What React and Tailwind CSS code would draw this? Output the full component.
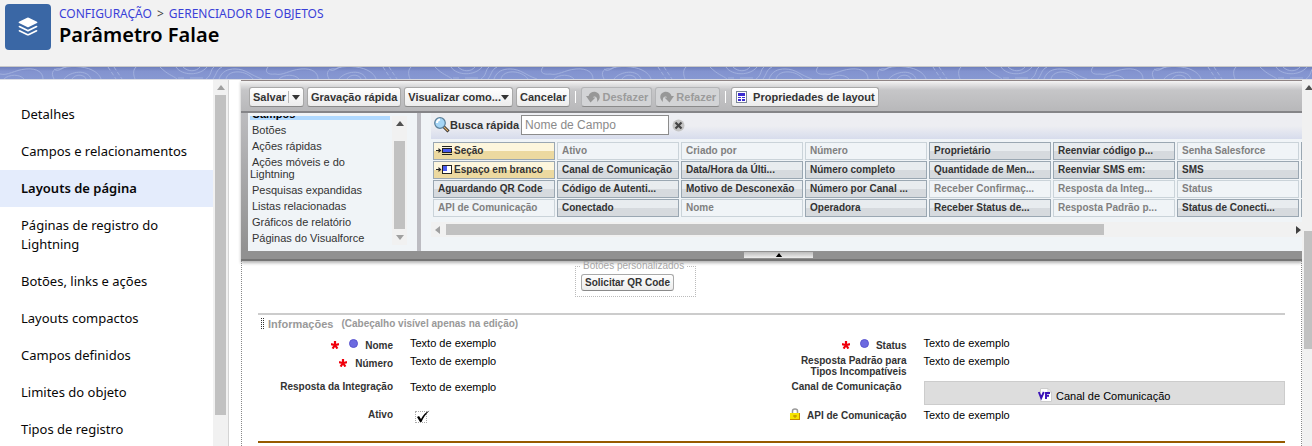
import React from "react";

const navItems = [
  "Detalhes",
  "Campos e relacionamentos",
  "Layouts de página",
  "Páginas de registro do Lightning",
  "Botões, links e ações",
  "Layouts compactos",
  "Campos definidos",
  "Limites do objeto",
  "Tipos de registro",
];

const categories = [
  "Campos",
  "Botões",
  "Ações rápidas",
  "Ações móveis e do Lightning",
  "Pesquisas expandidas",
  "Listas relacionadas",
  "Gráficos de relatório",
  "Páginas do Visualforce",
];

// Palette columns; "gold" are layout tools, "off" fields are already on the page.
const palette = [
  ["Seção", "gold"], ["Espaço em branco", "gold"], ["Aguardando QR Code", "on"], ["API de Comunicação", "off"],
  ["Ativo", "off"], ["Canal de Comunicação", "on"], ["Código de Autenti...", "on"], ["Conectado", "on"],
  ["Criado por", "off"], ["Data/Hora da Últi...", "on"], ["Motivo de Desconexão", "on"], ["Nome", "off"],
  ["Número", "off"], ["Número completo", "on"], ["Número por Canal ...", "on"], ["Operadora", "on"],
  ["Proprietário", "on"], ["Quantidade de Men...", "on"], ["Receber Confirmaç...", "off"], ["Receber Status de...", "on"],
  ["Reenviar código p...", "on"], ["Reenviar SMS em:", "on"], ["Resposta da Integ...", "off"], ["Resposta Padrão p...", "off"],
  ["Senha Salesforce", "off"], ["SMS", "on"], ["Status", "off"], ["Status de Conecti...", "on"],
  ["", "on"], ["", "on"], ["", "on"], ["", "on"],
];

const tones = {
  gold: "border-[#9aa7b2] bg-linear-to-b from-[#fdf6dd] from-50% to-[#ecd9a0] to-50% text-[#333]",
  on: "border-[#9aa7b2] bg-linear-to-b from-[#e8ecef] from-50% to-[#d6dade] to-50% text-[#333]",
  off: "border-[#cad3d9] bg-[#f0f4f7] text-[#808080]",
};

function Arrow({ dir = "up", className = "" }) {
  const d = {
    up: "M0 5 4 0 8 5Z",
    down: "M0 0H8L4 5Z",
    left: "M5 0V8L0 4Z",
    right: "M0 0V8L5 4Z",
  }[dir];
  const side = dir === "left" || dir === "right";
  return (
    <svg width={side ? 5 : 8} height={side ? 8 : 5} className={"shrink-0 " + className} fill="currentColor" aria-hidden="true">
      <path d={d} />
    </svg>
  );
}

function Banner() {
  return (
    <svg className="block h-3 w-full" aria-hidden="true">
      <defs>
        <pattern id="topo" width="275" height="12" patternUnits="userSpaceOnUse">
          <g fill="none" stroke="#a0afdd" strokeWidth="1">
            <path d="M0 7C8 9 14 3 26 2C38 1 43 6 43 12M4 12C9 7 20 7 24 12M54 12C50 5 54 1 60 2C68 -2 84 -1 92 3C98 6 100 9 101 12M54 2C58 6 63 0 66 0M64 12C70 4 88 2 91 12M72 12C76 6 85 8 86 12" />
            <path d="M108 0 116 12M114 0 122 12" strokeDasharray="4 2" />
            <path d="M136 0C132 4 134 9 135 12M160 0C168 8 172 8 177 12M176 0C182 9 200 9 207 0M183 0C188 5 196 5 200 0M178 11H184M190 11H203M206 12C212 8 210 3 214 0M213 12C217 7 216 3 222 0M219 12C222 4 228 2 235 2C246 2 250 8 262 12M226 12C228 2 247 3 253 12M268 0C264 5 268 8 275 7" />
          </g>
        </pattern>
        <linearGradient id="sky" x2="0" y2="1">
          <stop offset="0" stopColor="#6f80bb" />
          <stop offset=".35" stopColor="#8393cf" />
          <stop offset="1" stopColor="#8798d2" />
        </linearGradient>
      </defs>
      <rect width="100%" height="12" fill="url(#sky)" />
      <rect width="100%" height="12" fill="url(#topo)" />
    </svg>
  );
}

function ToolButton({ children, disabled, size = "h-5 text-[11px]", className = "" }) {
  const look = disabled
    ? "border-[#b4b5b7] bg-[#d3d4d6] text-[#9b9b9b]"
    : "border-[#a9a9a9] bg-linear-to-b from-white to-[#ececec] text-[#333]";
  return (
    <button
      type="button"
      disabled={disabled}
      className={"flex shrink-0 items-center rounded-[3px] border border-b-[#8a8a8a] leading-4 font-bold whitespace-nowrap " + size + " " + look + " " + className}
    >
      {children}
    </button>
  );
}

function CurvedArrow({ flip }) {
  return (
    <svg width="14" height="12" viewBox="0 0 14 12" className={flip ? "-scale-x-100" : ""} aria-hidden="true">
      <path d="M0 5H2.500C3.500 1.500 6.500 .5 9 .8C12.500 1.300 14.500 4.500 13.500 7.500C13 9 12 10 11 11C11.500 8.500 11 6 9 5.500C8 5.200 7.300 5.500 7 6.500H9.500L4.500 11.500Z" fill="#979797" />
    </svg>
  );
}

function Separator() {
  return <span className="mx-[2px] h-3 w-px shrink-0 bg-white" />;
}

function Toolbar() {
  return (
    <div className="flex h-[33px] items-center gap-[3px] border-t border-t-[#8f8585] border-b-2 border-b-[#858588] bg-linear-to-b from-[#f4f4f4] via-[#c6c6c8] via-30% to-[#b8b8ba] pt-[2px] pl-2">
      <ToolButton className="pr-[3px] pl-[3px]">
        Salvar
        <span className="ml-[2px] h-3 border-l border-[#b5b5b5]" />
        <Arrow dir="down" className="ml-[3px]" />
      </ToolButton>
      <ToolButton className="px-[3px]">Gravação rápida</ToolButton>
      <ToolButton className="px-[3px]">
        Visualizar como...
        <Arrow dir="down" />
      </ToolButton>
      <ToolButton className="px-[3px]">Cancelar</ToolButton>
      <Separator />
      <ToolButton disabled className="gap-[2px] pr-[3px] pl-1"><CurvedArrow />Desfazer</ToolButton>
      <ToolButton disabled className="gap-[2px] pr-[3px] pl-1"><CurvedArrow flip />Refazer</ToolButton>
      <Separator />
      <ToolButton className="gap-[6px] pr-[3px] pl-1">
        <svg width="11" height="12" aria-hidden="true">
          <rect x=".5" y=".5" width="10" height="11" fill="#fff" stroke="#7b8597" />
          <path d="M2 2H9V5H2ZM2 6H5V7H2ZM6 6H9V7H6ZM2 8H5V10H2ZM6 8H9V10H6Z" fill="#3b2bd0" />
        </svg>
        Propriedades de layout
      </ToolButton>
    </div>
  );
}

function CategoryList() {
  return (
    <div className="flex w-[169px] shrink-0 bg-[#f0f4f7] pt-[3px] pr-[10px] pb-[6px] pl-[2px]">
      <ul className="h-[129px] min-w-0 flex-1 overflow-hidden text-[11px] leading-3 text-[#333]">
        {categories.map((c, i) => (
          <li key={c} className={i === 0 ? "-mt-[10px] py-[2px] pr-[2px]" : "py-[2px] pr-5"}>
            <a href="#lista" className={i === 0 ? "block bg-[#afd9ff] indent-[2px] font-bold text-black" : "block indent-[2px]"}>{c}</a>
          </li>
        ))}
      </ul>
      <div className="flex h-[129px] w-[15px] flex-col items-center justify-between bg-[#f1f1f1] py-[5px]">
        <Arrow className="text-[#505050]" />
        <span className="mt-[15px] mb-[6px] w-[11px] flex-1 bg-[#c1c1c1]" />
        <Arrow dir="down" className="text-[#a0a0a0]" />
      </div>
    </div>
  );
}

function ToolGlyph({ blank }) {
  return (
    <svg width="16" height="9" className="-ml-[2px] shrink-0" aria-hidden="true">
      <path d="M0 4.500H4" stroke="#222" />
      <path d="M2.500 2 5.500 4.500 2.500 7Z" fill="#222" />
      {blank ? (
        <>
          <rect x="6.500" y=".5" width="9" height="8" fill="#fff" stroke="#222" />
          <rect x="7" y="1" width="4" height="5" fill="#4a5cf0" />
        </>
      ) : (
        <>
          <path d="M6 .5H16M6 8.500H16" stroke="#222" />
          <rect x="6.500" y="2.500" width="9" height="4" fill="#4a5cf0" stroke="#222" />
        </>
      )}
    </svg>
  );
}

function Palette() {
  return (
    <div className="min-w-0 flex-1 bg-[#f0f4f7] pl-[10px]">
      <div className="flex h-[26px] items-center bg-linear-to-b from-[#edeef2] from-50% to-[#d7dcec] pb-[2px] pl-[3px]">
        <svg width="16" height="16" viewBox="0 0 16 16" aria-hidden="true">
          <path d="M9.500 9.500 14.500 14.500" stroke="#222" strokeWidth="3" />
          <path d="M10 10 14 14" stroke="#e0b070" strokeWidth="1.200" />
          <circle cx="6" cy="6" r="5.300" fill="#a5d5f5" stroke="#5b7f99" strokeWidth="1.200" />
          <path d="M3 6A3.500 3.500 0 0 1 6 2.500" stroke="#fff" strokeWidth="2" fill="none" />
        </svg>
        <label htmlFor="busca" className="mr-[2px] text-[11px] font-bold text-[#333]">Busca rápida</label>
        <input id="busca" placeholder="Nome de Campo" className="h-5 w-[148px] border border-[#8c8c8c] bg-white px-[3px] text-xs placeholder:text-[#8a8a8a]" />
        <button type="button" aria-label="Limpar busca" className="ml-[3px]">
          <svg width="13" height="13" aria-hidden="true">
            <circle cx="6.500" cy="6.500" r="6" fill="#c4c4c4" />
            <path d="M3.500 3.500 9.500 9.500M9.500 3.500 3.500 9.500" stroke="#444" strokeWidth="2.200" />
          </svg>
        </button>
      </div>
      <div className="mt-[3px] ml-[2px] grid auto-cols-[122px] grid-flow-col grid-rows-[repeat(4,18px)] gap-x-[2px] gap-y-px overflow-hidden">
        {palette.map(([name, tone], i) => (
          <div key={i} className={"flex items-center border pb-px pl-1 text-[10px] leading-3 font-bold whitespace-nowrap " + tones[tone]}>
            {tone === "gold" && <ToolGlyph blank={i === 1} />}
            <span className={tone === "gold" ? "ml-[2px]" : ""}>{name}</span>
          </div>
        ))}
      </div>
      <div className="mt-[5px] flex h-[15px] items-center justify-between bg-[#f1f1f1] pr-px pl-1">
        <Arrow dir="left" className="text-[#a0a0a0]" />
        <span className="mr-auto ml-[6px] h-[11px] w-[76%] bg-[#c1c1c1]" />
        <Arrow dir="right" className="text-[#404040]" />
      </div>
    </div>
  );
}

function Required() {
  return (
    <svg width="8" height="8" viewBox="0 0 8 8" className="-mt-[2px]" role="img" aria-label="Obrigatório">
      <path d="M4 0V4.500M0 3 4 4.200 8 3M4 4 1.600 7.600M4 4 6.400 7.600" stroke="#f0000c" strokeWidth="2.200" fill="none" />
    </svg>
  );
}

function Dot() {
  return <span className="-mt-1 mr-[7px] ml-[10px] size-[9px] rounded-full border border-[#5a55cf] bg-[#6c6ae0]" />;
}

function Field({ icon, label, labelClass = "pt-px", children }) {
  return (
    <div className="flex gap-[17px]">
      <div className={"flex w-[135px] shrink-0 items-start justify-end text-[#333] " + labelClass}>
        <div className="flex items-center text-right text-[10px] leading-[11px] font-bold">
          {icon}
          <span className="whitespace-pre">{label}</span>
        </div>
      </div>
      <div className="min-w-0 flex-1 text-[11px] leading-[14px] text-black">{children}</div>
    </div>
  );
}

function LayoutCanvas() {
  return (
    <div className="flex-1 overflow-hidden border-x border-dotted border-[#888] pr-4 pl-4">
      <div className="ml-[317px] h-[52px]">
        <fieldset className="h-9 w-[121px] border border-dotted border-[#bbb] px-[5px]">
          <legend className="px-[2px] text-[10px] leading-[10px] whitespace-nowrap text-[#a5a5a5]">Botões personalizados</legend>
          <ToolButton size="h-[17px] text-[10px]" className="mt-[3px] px-[3px]">Solicitar QR Code</ToolButton>
        </fieldset>
      </div>
      <section className="border-t-2 border-[#ccc] pt-[3px]">
        <h2 className="flex items-center pl-[3px] text-[11px] leading-3 font-bold text-[#999]">
          <svg width="4" height="12" className="mr-[3px]" aria-hidden="true">
            <path d="M.5 0V12M2.500 0V12" stroke="#333" strokeDasharray="1 1" />
          </svg>
          Informações
          <span className="ml-2 text-[10px]">(Cabeçalho visível apenas na edição)</span>
        </h2>
        <div className="mt-[6px] grid grid-cols-2 grid-rows-[18px_26px_28px_24px]">
          <Field icon={<><Required /><Dot /></>} label="Nome" labelClass="pt-1">Texto de exemplo</Field>
          <Field icon={<><Required /><Dot /></>} label="Status" labelClass="pt-1">Texto de exemplo</Field>
          <Field icon={<span className="mr-2"><Required /></span>} label="Número" labelClass="pt-1">Texto de exemplo</Field>
          <Field label={"Resposta Padrão para\nTipos Incompatíveis"}>Texto de exemplo</Field>
          <Field label="Resposta da Integração">Texto de exemplo</Field>
          <Field label="Canal de Comunicação" labelClass="pt-px pr-[5px]">
            <div className="mt-px flex h-6 items-center justify-center gap-1 border border-[#ccc] bg-[#ddd] pt-[5px]">
              <svg width="14" height="14" viewBox="0 0 14 14" className="-mt-[2px]" aria-hidden="true">
                <path d="M2.500.5H10L13.500 4V13.500H2.500Z" fill="#fff" stroke="#ccc" />
                <path d="M10 .5V4H13.500" fill="none" stroke="#ccc" />
                <path d="M.8 4 3.200 10 5.800 4M8 11V5H12M8 7.800H11" fill="none" stroke="#3a12b8" strokeWidth="1.900" />
              </svg>
              Canal de Comunicação
            </div>
          </Field>
          <Field label="Ativo">
            <span className="relative ml-[5px] block size-3">
              <input type="checkbox" defaultChecked aria-label="Ativo" className="mt-[3px] block size-3 appearance-none border border-dotted border-[#aaa]" />
              <svg width="13" height="12" viewBox="0 0 13 12" className="pointer-events-none absolute -top-px left-[2px]" aria-hidden="true">
                <path d="M0 7 2 6 4 9C6 5 9 2 12.500 .5C9 4 6 8 4.500 12H3Z" fill="#000" />
              </svg>
            </span>
          </Field>
          <Field
            label="API de Comunicação"
            labelClass="pt-[2px]"
            icon={
              <svg width="10" height="12" viewBox="0 0 10 12" className="-mt-1 mr-[7px]" aria-hidden="true">
                <path d="M2.500 6V3Q2.500 1 5 1T7.500 3V6" fill="none" stroke="#999" strokeWidth="1.500" />
                <rect y="5" width="10" height="7" fill="#f6e400" />
                <path d="M0 11.500H10M9.500 5V12" stroke="#c58a00" />
                <path d="M3 8H7M5 7V10" stroke="#b88a00" />
              </svg>
            }
          >
            Texto de exemplo
          </Field>
        </div>
      </section>
      <div className="mt-[9px] border-t-2 border-[#965a00]" />
    </div>
  );
}

export default function App() {
  return (
    <div className="flex h-screen flex-col overflow-hidden bg-white font-['Liberation_Sans',Arial,sans-serif]">
      <header className="shrink-0 font-['Noto_Sans',sans-serif]">
        <div className="flex h-[67px] gap-2 border-b border-[#c9c9c9] bg-[#f2f2f2] pt-1 pl-[5px]">
          <span className="flex size-[46px] items-center justify-center rounded-[4px] bg-[#3a67a5]">
            <svg width="20" height="20" viewBox="0 0 20 20" fill="#fff" aria-hidden="true">
              <path d="M9.200.8Q10 .4 10.800.8L19 4.800Q20 5.400 19 6L10.800 10Q10 10.400 9.200 10L1 6Q0 5.400 1 4.800Z" />
              <path d="M1 9Q1.700 8.600 2.300 9L10 12.700 17.700 9Q18.300 8.600 19 9Q20 9.600 19 10.200L10.800 14.200Q10 14.600 9.200 14.200L1 10.200Q0 9.600 1 9Z" />
              <path d="M1 13.200Q1.700 12.800 2.300 13.200L10 16.900 17.700 13.200Q18.300 12.800 19 13.200Q20 13.800 19 14.400L10.800 18.400Q10 18.800 9.200 18.400L1 14.400Q0 13.800 1 13.200Z" />
            </svg>
          </span>
          <div>
            <nav className="flex gap-[5px] text-xs leading-5 text-[#3e3e3c]">
              <a href="#configuracao" className="text-[#3a3fd8]">CONFIGURAÇÃO</a>
              <span>&gt;</span>
              <a href="#objetos" className="text-[#3a3fd8]">GERENCIADOR DE OBJETOS</a>
            </nav>
            <h1 className="text-xl leading-[22px] font-semibold text-black">Parâmetro Falae</h1>
          </div>
        </div>
        <Banner />
        <div className="h-px bg-[#dcdde4]" />
      </header>

      <div className="flex min-h-0 flex-1">
        <aside className="flex w-[229px] shrink-0 overflow-hidden border-r border-[#d4d4d4]">
          <nav className="flex-1 pt-4 font-['Noto_Sans',sans-serif] text-[13px] leading-[19px] text-[#080707]">
            {navItems.map((item, i) => (
              <a
                key={item}
                href={"#nav-" + i}
                className={i === 2 ? "block bg-[#e4ecfc] py-[9px] pr-10 pl-[21px] font-semibold" : i === 3 ? "block py-[9px] pr-10 pl-[21px]" : "block py-[9px] pl-[21px] whitespace-nowrap"}
              >
                {item}
              </a>
            ))}
          </nav>
          <div className="flex w-[15px] flex-col items-center bg-[#f1f1f1] pt-[5px]">
            <Arrow className="text-[#a0a0a0]" />
            <span className="mt-[5px] mb-[31px] w-[11px] flex-1 bg-[#c1c1c1]" />
          </div>
        </aside>

        <main className="ml-3 flex min-w-0 flex-1 flex-col">
          <div className="shrink-0 shadow-[0_2px_3px_rgba(0,0,0,.3)]">
            <Toolbar />
            <div className="flex border-b-8 border-[#919191] bg-linear-to-b from-[#bcbcbf] to-[#919191] pl-[7px]">
              <CategoryList />
              <div className="w-1 shrink-0 bg-[#bcbcc2]" />
              <Palette />
            </div>
            <div className="relative h-[2px] bg-[#747474]">
              <button type="button" aria-label="Recolher painel" className="absolute -top-[7px] left-[503px] flex h-[6px] w-[69px] items-center justify-center bg-linear-to-b from-[#bbb] to-[#eee] text-black">
                <Arrow className="h-1" />
              </button>
            </div>
          </div>
          <LayoutCanvas />
        </main>
        <div className="flex w-[10px] shrink-0 flex-col bg-[#f1f1f1] pt-[5px] pl-[2px]">
          <Arrow className="ml-px text-[#505050]" />
          <span className="mt-[141px] h-[118px] bg-[#c1c1c1]" />
        </div>
      </div>
    </div>
  );
}
